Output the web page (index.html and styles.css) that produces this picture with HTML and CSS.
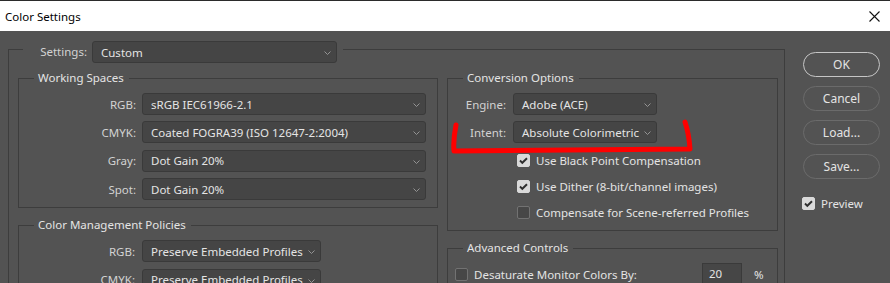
FILE: index.html
```html
<!DOCTYPE html>
<html lang="en">
<head>
    <meta charset="UTF-8">
    <title>Color Settings</title>
    <link rel="stylesheet" href="styles.css">
</head>
<body>
<div class="dialog">
    <div class="titlebar">
        <span class="title">Color Settings</span>
        <svg class="close" width="11" height="11" viewBox="0 0 11 11">
            <path d="M0.5,0.5 L10.5,10.5 M10.5,0.5 L0.5,10.5" stroke="#111" stroke-width="1.1" fill="none"/>
        </svg>
    </div>

    <div class="content">
        <fieldset class="frame main">
            <legend class="settings">
                <span class="settings-label">Settings:</span>
                <div class="select settings-select"><span>Custom</span><svg class="chev" width="7" height="4" viewBox="0 0 7 4"><path d="M0.5,0.5 L3.5,3.5 L6.5,0.5"/></svg></div>
            </legend>

            <div class="columns">
                <div class="col col-left">
                    <!-- Working Spaces -->
                    <fieldset class="frame group">
                        <legend>Working Spaces</legend>
                        <div class="form-grid ws-grid">
                            <label>RGB:</label>
                            <div class="select"><span>sRGB IEC61966-2.1</span><svg class="chev" width="7" height="4" viewBox="0 0 7 4"><path d="M0.5,0.5 L3.5,3.5 L6.5,0.5"/></svg></div>
                            <label>CMYK:</label>
                            <div class="select"><span>Coated FOGRA39 (ISO 12647-2:2004)</span><svg class="chev" width="7" height="4" viewBox="0 0 7 4"><path d="M0.5,0.5 L3.5,3.5 L6.5,0.5"/></svg></div>
                            <label>Gray:</label>
                            <div class="select"><span>Dot Gain 20%</span><svg class="chev" width="7" height="4" viewBox="0 0 7 4"><path d="M0.5,0.5 L3.5,3.5 L6.5,0.5"/></svg></div>
                            <label>Spot:</label>
                            <div class="select"><span>Dot Gain 20%</span><svg class="chev" width="7" height="4" viewBox="0 0 7 4"><path d="M0.5,0.5 L3.5,3.5 L6.5,0.5"/></svg></div>
                        </div>
                    </fieldset>

                    <!-- Color Management Policies -->
                    <fieldset class="frame group next">
                        <legend>Color Management Policies</legend>
                        <div class="form-grid cmp-grid">
                            <label>RGB:</label>
                            <div class="select"><span>Preserve Embedded Profiles</span><svg class="chev" width="7" height="4" viewBox="0 0 7 4"><path d="M0.5,0.5 L3.5,3.5 L6.5,0.5"/></svg></div>
                            <label>CMYK:</label>
                            <div class="select"><span>Preserve Embedded Profiles</span><svg class="chev" width="7" height="4" viewBox="0 0 7 4"><path d="M0.5,0.5 L3.5,3.5 L6.5,0.5"/></svg></div>
                        </div>
                    </fieldset>
                </div>

                <div class="col col-right">
                    <!-- Conversion Options -->
                    <fieldset class="frame group">
                        <legend>Conversion Options</legend>
                        <div class="form-grid conv-grid">
                            <label>Engine:</label>
                            <div class="select"><span>Adobe (ACE)</span><svg class="chev" width="7" height="4" viewBox="0 0 7 4"><path d="M0.5,0.5 L3.5,3.5 L6.5,0.5"/></svg></div>
                            <label>Intent:</label>
                            <div class="select"><span>Absolute Colorimetric</span><svg class="chev" width="7" height="4" viewBox="0 0 7 4"><path d="M0.5,0.5 L3.5,3.5 L6.5,0.5"/></svg></div>
                        </div>
                        <div class="checks">
                            <div class="check-row">
                                <span class="box checked"><svg width="13" height="13" viewBox="0 0 13 13"><path d="M3,6.5 L5.3,8.8 L10,4.2"/></svg></span>
                                <span>Use Black Point Compensation</span>
                            </div>
                            <div class="check-row">
                                <span class="box checked"><svg width="13" height="13" viewBox="0 0 13 13"><path d="M3,6.5 L5.3,8.8 L10,4.2"/></svg></span>
                                <span>Use Dither (8-bit/channel images)</span>
                            </div>
                            <div class="check-row">
                                <span class="box"></span>
                                <span>Compensate for Scene-referred Profiles</span>
                            </div>
                        </div>
                    </fieldset>

                    <!-- Advanced Controls -->
                    <fieldset class="frame group next">
                        <legend>Advanced Controls</legend>
                        <div class="adv-row">
                            <span class="box"></span>
                            <span class="adv-label">Desaturate Monitor Colors By:</span>
                            <div class="num-input">20</div>
                            <span class="unit">%</span>
                        </div>
                    </fieldset>
                </div>
            </div>
        </fieldset>

        <div class="buttons">
            <button class="btn primary">OK</button>
            <button class="btn">Cancel</button>
            <button class="btn">Load...</button>
            <button class="btn">Save...</button>
            <div class="check-row preview">
                <span class="box checked"><svg width="13" height="13" viewBox="0 0 13 13"><path d="M3,6.5 L5.3,8.8 L10,4.2"/></svg></span>
                <span>Preview</span>
            </div>
        </div>
    </div>

    <!-- hand-drawn red annotation -->
    <svg class="annotation" width="890" height="283" viewBox="0 0 890 283">
        <path d="M456,125 Q453,140 454,151 L690,149 Q689,134 685,122" stroke="#ff0000" stroke-width="5" fill="none" stroke-linecap="round" stroke-linejoin="round"/>
    </svg>
</div>
</body>
</html>
```

FILE: styles.css
```css
:root {
    --bg: #535353;
    --line: #3d3d3d;
    --field-bg: #454545;
    --field-border: #3a3a3a;
    --text: #e4e4e4;
    --label: #d2d2d2;
}

* {
    box-sizing: border-box;
}

html, body {
    margin: 0;
    height: 100%;
    overflow: hidden;
}

body {
    background: var(--bg);
    font-family: "Segoe UI", "Noto Sans", sans-serif;
    font-size: 11.5px;
    color: var(--text);
}

.dialog {
    position: relative;
    height: 100%;
}

/* Title bar */
.titlebar {
    height: 31px;
    border-top: 1px solid #2b2b2b;
    background: #fff;
    display: flex;
    align-items: center;
    justify-content: space-between;
    padding: 0 10px 0 5px;
}

.title {
    color: #000;
    font-size: 11.5px;
}

.close {
    display: block;
}

/* Main layout */
.content {
    display: flex;
    align-items: flex-start;
    padding-left: 8px;
}

.frame {
    margin: 0;
    padding: 0;
    min-width: 0;
    border: 1px solid var(--line);
}

.frame.main {
    width: 777px;
    margin-top: 10px;
    padding: 13px 6px 0 9px;
    height: 400px;
}

.settings {
    margin-left: 5px;
    padding: 0 6px;
    height: 16px;
    display: flex;
    align-items: flex-start;
}

.settings-label {
    width: 58px;
    text-align: right;
    color: var(--label);
    line-height: 22px;
    margin-right: 5px;
}

.settings-select {
    width: 245px;
}

.columns {
    display: flex;
    gap: 9px;
}

.col-left {
    width: 420px;
}

.col-right {
    width: 331px;
}

.group legend {
    margin-left: 15px;
    padding: 0 5px 0 4px;
    line-height: 16px;
    color: var(--text);
}

.frame.group.next {
    margin-top: 9px;
}

/* Label + select rows */
.form-grid {
    display: grid;
    row-gap: 6.4px;
    grid-auto-rows: 22px;
    padding: 7px 0 7px;
    align-items: center;
}

.form-grid label {
    text-align: right;
    color: var(--label);
}

.ws-grid {
    grid-template-columns: 117px 284px;
    column-gap: 6px;
}

.cmp-grid {
    grid-template-columns: 116px 179px;
    column-gap: 7px;
}

.conv-grid {
    grid-template-columns: 58px 144px;
    column-gap: 7px;
    padding-bottom: 0;
}

.select {
    height: 22px;
    background: var(--field-bg);
    border: 1px solid var(--field-border);
    border-radius: 3px;
    display: flex;
    align-items: center;
    padding: 0 5px 0 8px;
    color: var(--text);
    white-space: nowrap;
}

.select span {
    flex: 1;
    min-width: 0;
}

.chev {
    flex: none;
    margin-left: 2px;
    margin-top: 2px;
}

.chev path {
    stroke: #9c9c9c;
    stroke-width: 0.9;
    fill: none;
}

/* Checkboxes */
.checks {
    display: flex;
    flex-direction: column;
    gap: 13px;
    padding: 11px 0 11px 69px;
}

.check-row {
    display: flex;
    align-items: center;
    gap: 6px;
    height: 13px;
    white-space: nowrap;
}

.box {
    width: 13px;
    height: 13px;
    flex: none;
    border-radius: 2px;
    background: #474747;
    border: 1px solid #727272;
}

.box.checked {
    background: #d9d9d9;
    border-color: #d9d9d9;
}

.box svg {
    display: block;
    margin: -1px;
}

.box svg path {
    stroke: #2e2e2e;
    stroke-width: 1.9;
    fill: none;
}

/* Advanced controls */
.adv-row {
    display: flex;
    align-items: center;
    height: 22px;
    padding: 0 9px 0 7px;
    margin-top: 7px;
}

.adv-row .box {
    margin-right: 6px;
}

.adv-label {
    flex: 1;
    white-space: nowrap;
}

.num-input {
    width: 40px;
    height: 22px;
    background: #464646;
    border: 1px solid #3a3a3a;
    padding: 0 6px;
    line-height: 20px;
}

.unit {
    width: 14px;
    margin-left: 12px;
}

/* Buttons */
.buttons {
    margin-left: 18px;
    margin-top: 21px;
    width: 77px;
    display: flex;
    flex-direction: column;
    gap: 9px;
}

.btn {
    height: 25px;
    border-radius: 13px;
    border: 1px solid #6b6b6b;
    background: transparent;
    color: var(--text);
    font-family: inherit;
    font-size: 12px;
    padding: 0;
}

.btn.primary {
    border: 1.5px solid #c6c6c6;
}

.preview {
    margin-top: 9px;
    margin-left: -1px;
}

.annotation {
    position: absolute;
    top: 0;
    left: 0;
    pointer-events: none;
}
```
